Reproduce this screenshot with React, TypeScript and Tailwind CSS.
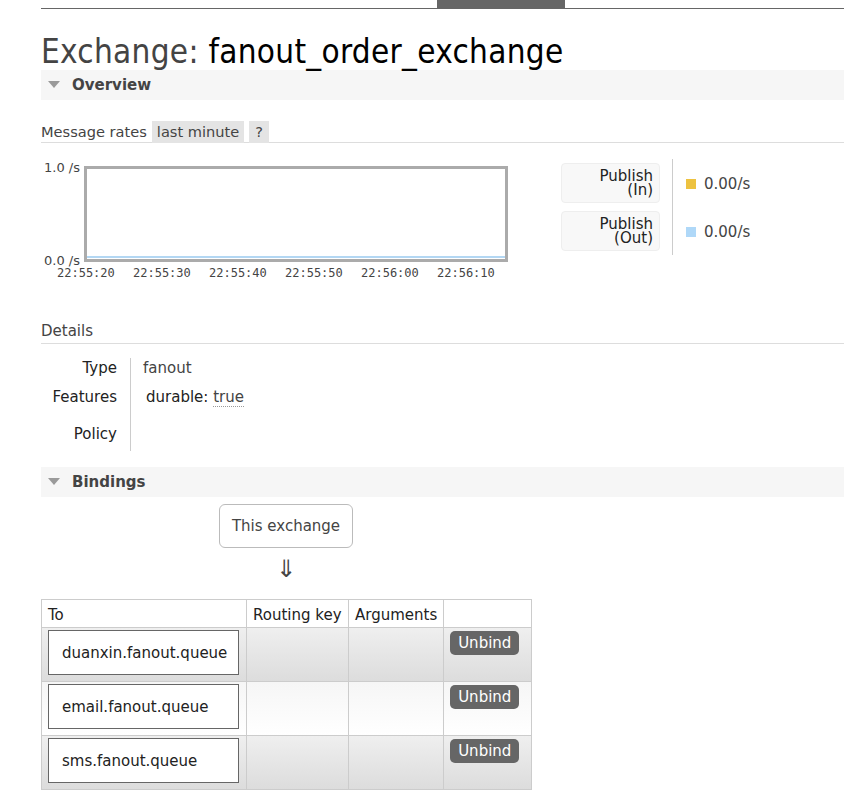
import React from "react";

const font = { fontFamily: '"DejaVu Sans", Verdana, sans-serif' };
const mono = { fontFamily: '"DejaVu Sans Mono", monospace' };

function SectionHeader({ title }: { title: string }) {
  return (
    <div className="flex h-[30px] items-center bg-[#f6f6f6]">
      <svg width="12" height="8" viewBox="0 0 12 8" className="ml-[7px] mr-[12px]">
        <polygon points="0,0 12,0 6,7" fill="#9a9a9a" />
      </svg>
      <span className="text-[15px] font-bold text-[#444]">{title}</span>
    </div>
  );
}

function LegendLabel({ label1, label2 }: { label1: string; label2: string }) {
  return (
    <div className="flex h-[40px] w-[99px] flex-col items-end justify-center rounded-[4px] border border-[#eeeeee] bg-[#f8f8f8] pr-[6px] text-[15px] leading-[14px] text-[#222]">
      <span className="h-[14px]">{label1}</span>
      <span className="h-[14px]">{label2}</span>
    </div>
  );
}

export default function App() {
  const rows = ["duanxin.fanout.queue", "email.fanout.queue", "sms.fanout.queue"];
  return (
    <div className="min-h-[801px] w-[844px] bg-white pl-[41px] text-[#444]" style={font}>
      {/* top nav stub */}
      <div className="flex h-[8px]">
        <div className="w-[396px]" />
        <div className="h-[8px] w-[128px] bg-[#666]" />
      </div>
      <div className="h-px bg-[#666]" />

      {/* title */}
      <h1
        className="mt-[25px] h-[36px] whitespace-nowrap text-[33px] leading-[36px] tracking-[0.3px]"
        style={{ fontFamily: '"DejaVu Sans Condensed", "DejaVu Sans", sans-serif' }}
      >
        <span className="text-[#444]">Exchange: </span>
        <span className="text-black">fanout_order_exchange</span>
      </h1>

      <SectionHeader title="Overview" />

      {/* message rates */}
      <div className="mt-[21px] flex h-[22px] items-center border-b border-[#dddddd] text-[14.6px]">
        <span className="mr-[5px]">Message rates</span>
        <span className="flex h-[22px] items-center bg-[#e4e4e4] px-[5px]">last minute</span>
        <span className="ml-[5px] flex h-[22px] items-center bg-[#e4e4e4] px-[6px]">?</span>
      </div>

      {/* chart + legend */}
      <div className="flex">
        <div className="mt-[23px] flex flex-col">
          <div className="flex">
            <div className="flex w-[43px] flex-col items-end justify-between pr-[4px] text-[13px] leading-[14px] text-[#444]">
              <span className="-mt-[5px] whitespace-nowrap">1.0 /s</span>
              <span className="-mb-[6px] whitespace-nowrap">0.0 /s</span>
            </div>
            <div className="flex h-[96px] w-[424px] flex-col justify-end border-[3px] border-[#ababab] bg-white">
              <div className="mb-[1px] h-[2px] bg-[#b3d7f3]" />
            </div>
          </div>
          <div className="ml-[16px] mt-[4px] flex gap-[18px] text-[12px] leading-[14px] text-[#444]" style={mono}>
            {["22:55:20", "22:55:30", "22:55:40", "22:55:50", "22:56:00", "22:56:10"].map((t) => (
              <span key={t} className="w-[58px]">{t}</span>
            ))}
          </div>
        </div>

        <div className="ml-[53px] mt-[20px] flex">
          <div className="flex flex-col gap-[8px]">
            <LegendLabel label1="Publish" label2="(In)" />
            <LegendLabel label1="Publish" label2="(Out)" />
          </div>
          <div className="ml-[12px] -mt-[4px] h-[96px] w-px bg-[#cccccc]" />
          <div className="ml-[13px] flex flex-col gap-[8px] pt-[1px] text-[15px] text-[#444]">
            <div className="flex h-[40px] items-center">
              <span className="mr-[8px] h-[10px] w-[10px] bg-[#edc240]" />
              0.00/s
            </div>
            <div className="flex h-[40px] items-center">
              <span className="mr-[8px] h-[10px] w-[10px] bg-[#afd8f8]" />
              0.00/s
            </div>
          </div>
        </div>
      </div>

      {/* details */}
      <div className="mt-[41px] h-[23px] border-b border-[#dddddd] text-[15px] leading-[20px]">Details</div>
      <div className="mt-[14px] flex h-[93px]">
        <div className="flex w-[76px] flex-col items-end text-[15px] text-[#222]">
          <span className="h-[20px] leading-[20px]">Type</span>
          <span className="mt-[9px] h-[20px] leading-[20px]">Features</span>
          <span className="mt-[17px] h-[20px] leading-[20px]">Policy</span>
        </div>
        <div className="ml-[13px] w-px bg-[#cccccc]" />
        <div className="flex flex-col pl-[12px] text-[15px]">
          <span className="h-[20px] leading-[20px] text-[#444]">fanout</span>
          <span className="ml-[3px] mt-[9px] h-[20px] leading-[20px] text-[#222]">
            durable: <span className="border-b border-dotted border-[#999] text-[#444]">true</span>
          </span>
        </div>
      </div>

      <div className="mt-[16px]">
        <SectionHeader title="Bindings" />
      </div>

      {/* this exchange */}
      <div className="ml-[178px] mt-[7px] flex h-[44px] w-[134px] items-center justify-center rounded-[6px] border border-[#bbbbbb] text-[15px] text-[#444]">
        This exchange
      </div>
      <div className="ml-[233px] mt-[8px] h-[26px] w-[24px] text-center text-[24px] leading-[26px] text-[#444]">⇓</div>

      {/* bindings table */}
      <table className="mt-[17px] w-[491px] border-collapse text-[15px]">
        <thead>
          <tr className="h-[28px] bg-white text-left text-[#222]">
            <th className="w-[205px] border border-[#cccccc] px-[6px] pt-[3px] font-normal">To</th>
            <th className="w-[102px] border border-[#cccccc] px-[6px] pt-[3px] font-normal">Routing key</th>
            <th className="w-[95px] border border-[#cccccc] px-[6px] pt-[3px] font-normal">Arguments</th>
            <th className="border border-[#cccccc] font-normal"></th>
          </tr>
        </thead>
        <tbody>
          {rows.map((q, i) => (
            <tr
              key={q}
              className={
                i % 2 === 0
                  ? "h-[54px] bg-gradient-to-b from-[#efefef] to-[#dcdcdc]"
                  : "h-[54px] bg-gradient-to-b from-[#f6f6f6] to-white"
              }
            >
              <td className="border border-[#cccccc] px-[6px] py-[2px] align-top">
                <div className="flex h-[45px] w-[191px] items-center border border-[#666] bg-white pl-[13px] pt-[2px] text-[#222]">
                  {q}
                </div>
              </td>
              <td className="border border-[#cccccc]"></td>
              <td className="border border-[#cccccc]"></td>
              <td className="border border-[#cccccc] px-[6px] pt-[3px] align-top">
                <span className="flex h-[24px] w-[69px] items-center justify-center rounded-[5px] bg-[#666] pt-[1px] text-[15px] text-white">
                  Unbind
                </span>
              </td>
            </tr>
          ))}
        </tbody>
      </table>
    </div>
  );
}
